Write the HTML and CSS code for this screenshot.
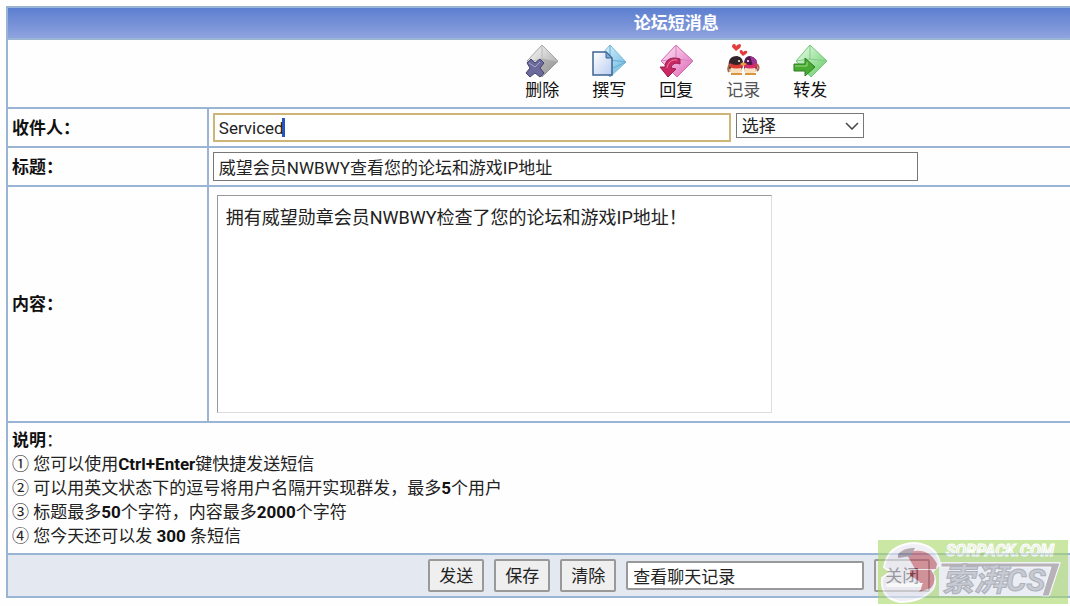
FILE: index.html
```html
<!DOCTYPE html>
<html lang="zh-CN">
<head>
    <meta charset="UTF-8">
    <meta name="viewport" content="width=device-width, initial-scale=1.0">
    <title>论坛短消息</title>
    <link rel="stylesheet" href="styles.css">
</head>
<body>

    <form class="page">
        <table class="message">
            <thead>
                <tr>
                    <th class="title" colspan="2">论坛短消息</th>
                </tr>
            </thead>
            <tbody>
                <tr>
                    <td colspan="2">
                        <div class="toolbar">
                            <a href="#delete">
                                <svg viewBox="0 0 34 34">
                                    <defs>
                                        <linearGradient id="gray" x1="0" y1="0" x2="1" y2="1">
                                            <stop offset="0" stop-color="#ffffff"/>
                                            <stop offset="1" stop-color="#9b9b9b"/>
                                        </linearGradient>
                                    </defs>
                                    <path d="M17 1L33 17L17 33L2 17Z" fill="url(#gray)" stroke="#a4a4a4"/>
                                    <path d="M17 1V15L2 18M17 15L33 18" fill="none" stroke="#b9b9b9"/>
                                    <path d="M33 18L17 33L9 26L17 15Z" fill="#777" opacity="0.3"/>
                                    <path d="M2 19L6 15L10 19L15 15L19 19L15 24L19 29L15 33L10 29L5 33L1 29L5 24Z" fill="#6c6a9c" stroke="#45436f"/>
                                    <path d="M4 19L10 23L15 18" fill="none" stroke="#a5a4c8"/>
                                </svg>
                                删除
                            </a>
                            <a href="#write">
                                <svg viewBox="0 0 34 34">
                                    <defs>
                                        <linearGradient id="blue" x1="0" y1="0" x2="1" y2="1">
                                            <stop offset="0" stop-color="#e8f9ff"/>
                                            <stop offset="1" stop-color="#62b4de"/>
                                        </linearGradient>
                                        <linearGradient id="paper" x1="0" y1="0" x2="1" y2="1">
                                            <stop offset="0" stop-color="#ffffff"/>
                                            <stop offset="1" stop-color="#b9cdf0"/>
                                        </linearGradient>
                                    </defs>
                                    <path d="M18 1L34 18L18 33L4 17Z" fill="url(#blue)" stroke="#7dbcdc"/>
                                    <path d="M18 1V16L34 18L21 24" fill="none" stroke="#69acd0"/>
                                    <path d="M1 8H14L20 14V31H1Z" fill="url(#paper)" stroke="#3e6493" stroke-width="1.5"/>
                                    <path d="M14 8V14H20Z" fill="#7fa5d2" stroke="#3e6493"/>
                                </svg>
                                撰写
                            </a>
                            <a href="#reply">
                                <svg viewBox="0 0 34 34">
                                    <defs>
                                        <linearGradient id="pink" x1="0" y1="0" x2="1" y2="1">
                                            <stop offset="0" stop-color="#ffeafa"/>
                                            <stop offset="1" stop-color="#df62b3"/>
                                        </linearGradient>
                                    </defs>
                                    <path d="M17 1L34 17L18 33L2 17Z" fill="url(#pink)" stroke="#cf67ad"/>
                                    <path d="M17 1V15L2 17M17 15L34 17" fill="none" stroke="#d384bd"/>
                                    <path d="M21 15C12 12 6 16 6 23L1 23L9 33L17 25L12 24C13 20 16 18 21 20Z" fill="#c92863" stroke="#981c4c"/>
                                    <path d="M18 16C12 15 9 19 8 24" fill="none" stroke="#ed82a8"/>
                                </svg>
                                回复
                            </a>
                            <a class="muted" href="#history">
                                <svg viewBox="0 0 34 34">
                                    <path d="M10 7L6 3Q6 0 8 0Q10 0 10 2Q12 0 14 0Q16 1 14 4Z" fill="#e43d3d"/>
                                    <path d="M17 12L14 9Q13 6 15 6Q17 6 17 8Q19 6 21 7Q22 9 20 10Z" fill="#e43d3d"/>
                                    <path d="M3 24Q1 12 11 12Q18 13 17 22L15 28H5Z" fill="#302329"/>
                                    <path d="M18 24Q17 12 24 12Q32 13 31 24L29 28H19Z" fill="#4f164d"/>
                                    <path d="M24 12Q32 13 31 24L27 22Z" fill="#a03393"/>
                                    <ellipse cx="10" cy="26" rx="6" ry="4" fill="#fbe0c0"/>
                                    <ellipse cx="24" cy="26" rx="6" ry="4" fill="#fbe0c0"/>
                                    <path d="M4 19Q10 23 17 19L17 23Q10 26 4 23Z" fill="#d93a32"/>
                                    <path d="M18 19Q24 23 31 19L31 23Q24 26 18 23Z" fill="#d62c67"/>
                                    <circle cx="13" cy="17" r="1" fill="#fff"/>
                                    <circle cx="22" cy="17" r="1" fill="#fff"/>
                                    <path d="M14 20L17 18L21 20L17 22Z" fill="#e6a344"/>
                                    <path d="M4 20Q1 24 3 28M31 20Q34 24 31 27" fill="none" stroke="#a96843" stroke-width="2"/>
                                    <path d="M5 30H16M19 30H30" stroke="#d9953c" stroke-width="2"/>
                                </svg>
                                记录
                            </a>
                            <a href="#forward">
                                <svg viewBox="0 0 34 34">
                                    <defs>
                                        <linearGradient id="green" x1="0" y1="0" x2="1" y2="1">
                                            <stop offset="0" stop-color="#f0fff0"/>
                                            <stop offset="1" stop-color="#5fcb61"/>
                                        </linearGradient>
                                    </defs>
                                    <path d="M17 1L34 17L18 33L3 17Z" fill="url(#green)" stroke="#75c77a"/>
                                    <path d="M17 1V15L3 17M17 15L34 17" fill="none" stroke="#86ca89"/>
                                    <path d="M1 20H12V14L22 23L12 32V27H1Z" fill="#48aa32" stroke="#2d7e22"/>
                                    <path d="M2 22H14V18" fill="none" stroke="#98dc7b"/>
                                </svg>
                                转发
                            </a>
                        </div>
                    </td>
                </tr>
                <tr>
                    <th class="label"><label for="receiver">收件人：</label></th>
                    <td class="field">
                        <div class="receiver">
                            <input type="text" id="receiver" value="Serviced">
                            <span class="caret"></span>
                            <select aria-label="选择">
                                <option>选择</option>
                            </select>
                            <svg class="arrow" viewBox="0 0 14 8">
                                <path d="M1 1L7 7L13 1" fill="none" stroke="#444" stroke-width="1.5"/>
                            </svg>
                        </div>
                    </td>
                </tr>
                <tr>
                    <th class="label"><label for="subject">标题：</label></th>
                    <td class="field">
                        <input class="subject" type="text" id="subject" value="威望会员NWBWY查看您的论坛和游戏IP地址">
                    </td>
                </tr>
                <tr>
                    <th class="label"><label for="content">内容：</label></th>
                    <td class="field">
                        <textarea id="content">拥有威望勋章会员NWBWY检查了您的论坛和游戏IP地址！</textarea>
                    </td>
                </tr>
                <tr>
                    <td class="notes" colspan="2">
                        <b>说明</b>：<br>
                        ① 您可以使用<b>Ctrl+Enter</b>键快捷发送短信<br>
                        ② 可以用英文状态下的逗号将用户名隔开实现群发，最多<b>5</b>个用户<br>
                        ③ 标题最多<b>50</b>个字符，内容最多<b>2000</b>个字符<br>
                        ④ 您今天还可以发 <b>300</b> 条短信
                    </td>
                </tr>
                <tr>
                    <td class="footer" colspan="2">
                        <div class="actions">
                            <button type="button">发送</button>
                            <button type="button">保存</button>
                            <button type="reset">清除</button>
                            <input type="text" aria-label="查看聊天记录" value="查看聊天记录">
                            <button type="button">关闭</button>
                        </div>
                    </td>
                </tr>
            </tbody>
        </table>

        <svg class="stamp" viewBox="0 0 190 64">
            <rect width="190" height="64" fill="#a9d86a"/>
            <path d="M61 22H183L172 56H61Z" fill="#eef1f6"/>
            <path d="M63 23H182L171 56H164L173 27H63Z" fill="#9a8d93" stroke="#fff"/>
            <path d="M6 27Q10 4 37 3Q59 5 62 24L54 32Q60 40 55 49Q43 62 22 62Q2 58 4 38L12 32Z" fill="#e6e6ef" stroke="#fff" stroke-width="2"/>
            <path d="M28 13Q50 5 59 24L58 29H37L32 20Z" fill="#bd5560"/>
            <path d="M20 14Q27 7 37 8L33 16L20 18Z" fill="#85717f"/>
            <path d="M32 30H53Q60 39 53 48L41 52Q49 43 32 36Z" fill="#bd5560"/>
            <path d="M8 43H45L43 47H8Z" fill="#fff"/>
            <text class="stamp-site" x="68" y="16">SORPACK.COM</text>
            <text class="stamp-name" x="64" y="51">索湃CS</text>
        </svg>
    </form>

</body>
</html>
```
FILE: styles.css
```css
* {
    box-sizing: border-box;
}

body {
    margin: 0;
    background-color: #fefefe;
    color: #222;
    font-family: Roboto, "Noto Sans CJK SC", sans-serif;
    font-size: 17px;
    line-height: 24px;
}

.page {
    position: relative;
    overflow: hidden;
    padding: 6px 0 9px 6px;
}

.message {
    width: 126%;
    border-collapse: collapse;
}

.message th, .message td {
    border: 2px solid #9ab4d3;
    padding: 0;
}

.message .title {
    height: 32px;
    background: linear-gradient(#5c7fd0, #7d95d9 65%, #8fa5df);
    color: white;
}

.toolbar {
    display: flex;
    justify-content: center;
    gap: 33px;
    padding: 4px 0 5px;
}

.toolbar a {
    display: flex;
    flex-direction: column;
    align-items: center;
    color: #111;
    text-decoration: none;
}

.toolbar svg {
    width: 34px;
    height: 34px;
}

.toolbar .muted {
    color: #555;
}

.message .label {
    width: 15%;
    padding-left: 4px;
    text-align: left;
    color: #111;
}

.message .field {
    padding: 4px;
}

input, select, button, textarea {
    margin: 0;
    border: 1px solid #777;
    border-radius: 0;
    font: inherit;
    color: #222;
    background-color: white;
}

input {
    height: 29px;
    padding: 0 5px;
}

.receiver {
    display: flex;
    align-items: flex-start;
    gap: 5px;
    position: relative;
}

.receiver input {
    width: 518px;
    border: 2px solid #cdb578;
    padding: 0 4px;
}

.receiver select {
    width: 128px;
    height: 25px;
    padding: 0 5px;
    appearance: none;
}

/* text cursor behind the receiver name */
.caret {
    position: absolute;
    left: 69px;
    top: 5px;
    width: 3px;
    height: 19px;
    background-color: #2455bd;
}

.arrow {
    position: absolute;
    left: 632px;
    top: 9px;
    width: 14px;
    height: 8px;
    pointer-events: none;
}

.subject {
    display: block;
    width: 705px;
}

textarea {
    display: block;
    width: 555px;
    height: 218px;
    margin: 4px;
    padding: 10px 8px;
    border-color: #999 #ddd #ddd #999;
    font-size: 18px;
    resize: none;
}

.message .notes {
    padding: 5px 4px;
}

.notes b {
    color: #111;
}

.message .footer {
    padding: 4px 0 4px 6px;
    background-color: #e4e8f1;
}

.actions {
    display: flex;
    justify-content: center;
    align-items: center;
    gap: 10px;
}

.actions button {
    width: 56px;
    height: 33px;
    padding: 0;
    background-color: #efefef;
}

.actions input {
    width: 238px;
}

.actions button, .actions input {
    border: 2px solid #999;
    border-radius: 2px;
}

.stamp {
    position: absolute;
    right: 2px;
    bottom: 3px;
    width: 190px;
    height: 64px;
    opacity: 0.6;
    pointer-events: none;
}

.stamp-site {
    fill: #d5dfc9;
    stroke: #fff;
    font-size: 16px;
    font-style: italic;
    font-weight: bold;
}

.stamp-name {
    fill: #b5b7bf;
    stroke: #888c95;
    font-size: 32px;
    font-style: italic;
    font-weight: bold;
}
```
